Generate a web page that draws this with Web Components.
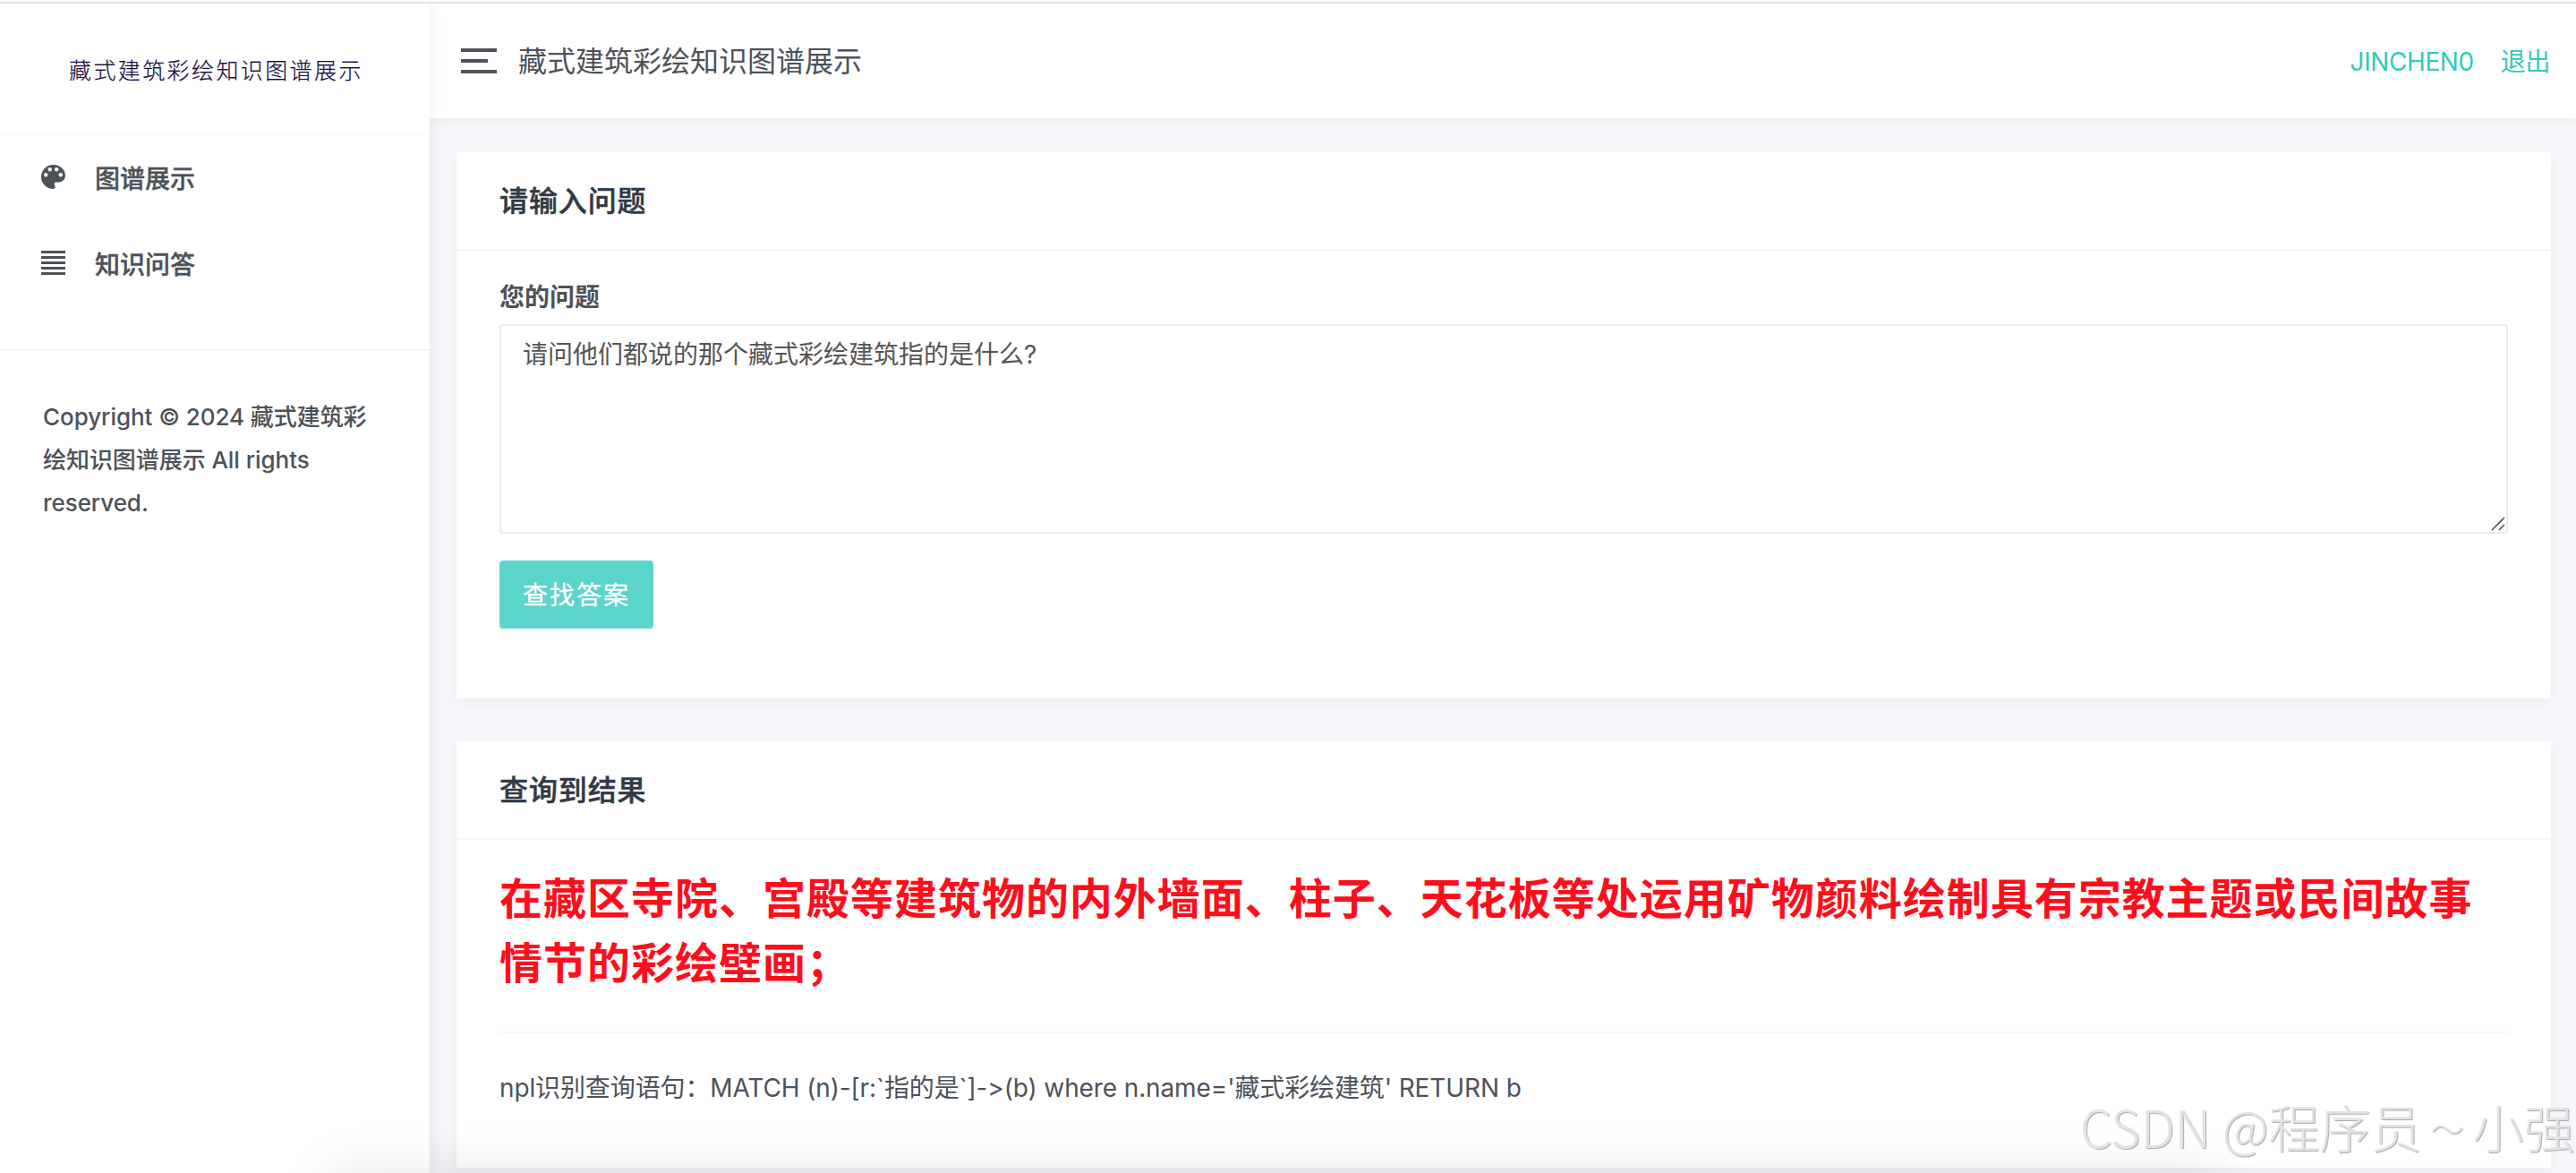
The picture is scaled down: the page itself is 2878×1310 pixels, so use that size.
<!DOCTYPE html>
<html lang="zh-CN">
<head>
<meta charset="utf-8">
<title>藏式建筑彩绘知识图谱展示</title>
<style>
    html, body {
        margin: 0;
        height: 1310px;
        overflow: hidden;
    }

    body {
        font-family: Inter, "Noto Sans CJK SC", sans-serif;
        font-size: 28px;
        color: #4d5259;
        background: #f5f6fa;
    }
</style>
</head>
<body>
<kg-app>
    <kg-sidebar slot="sidebar" logo="藏式建筑彩绘知识图谱展示">
        <kg-nav-item icon="palette">图谱展示</kg-nav-item>
        <kg-nav-item icon="lines">知识问答</kg-nav-item>
        <span slot="footer">Copyright © 2024 藏式建筑彩绘知识图谱展示 All rights reserved.</span>
    </kg-sidebar>
    <kg-header slot="header">
        藏式建筑彩绘知识图谱展示
        <kg-link slot="links">JINCHEN0</kg-link>
        <kg-link slot="links">退出</kg-link>
    </kg-header>
    <kg-card style="height: 610px">
        <span slot="title">请输入问题</span>
        <kg-question label="您的问题" value="请问他们都说的那个藏式彩绘建筑指的是什么?"></kg-question>
    </kg-card>
    <kg-card style="height: 476px">
        <span slot="title">查询到结果</span>
        <kg-answer>
            在藏区寺院、宫殿等建筑物的内外墙面、柱子、天花板等处运用矿物颜料绘制具有宗教主题或民间故事情节的彩绘壁画；
            <span slot="query">npl识别查询语句：MATCH (n)-[r:`指的是`]-&gt;(b) where n.name='藏式彩绘建筑' RETURN b</span>
        </kg-answer>
    </kg-card>
</kg-app>
<kg-watermark></kg-watermark>

<script>
const ICONS = {
    palette: `<svg width="27" height="27" viewBox="3 3 18 18"><path fill="currentColor" d="M12 3a9 9 0 0 0 0 18c.83 0 1.5-.67 1.5-1.5 0-.39-.15-.74-.39-1.01-.23-.26-.38-.61-.38-.99 0-.83.67-1.5 1.5-1.5H16c2.76 0 5-2.24 5-5 0-4.42-4.03-8-9-8zm-5.5 9a1.5 1.5 0 1 1 0-3 1.5 1.5 0 0 1 0 3zm3-4a1.5 1.5 0 1 1 0-3 1.5 1.5 0 0 1 0 3zm5 0a1.5 1.5 0 1 1 0-3 1.5 1.5 0 0 1 0 3zm3 4a1.5 1.5 0 1 1 0-3 1.5 1.5 0 0 1 0 3z"/></svg>`,
    lines: `<svg width="27" height="27" viewBox="0 0 27 27"><path fill="currentColor" d="M0 0h27v3H0zM0 6h27v3H0zM0 12h27v3H0zM0 18h27v3H0zM0 24h27v3H0z"/></svg>`
};

class KgElement extends HTMLElement {

    constructor() {
        super();
        this.attachShadow({mode: "open"});
    }

    connectedCallback() {
        this.shadowRoot.innerHTML = `<style>* { margin: 0; padding: 0; box-sizing: border-box; }</style>` + this.template();
    }
}

class KgApp extends KgElement {
    template() {
        return `
            <style>
                :host {
                    display: grid;
                    grid-template-columns: 480px 1fr;
                    grid-template-rows: 4px 128px 1fr;
                    height: 1310px;
                    overflow: hidden;
                    position: relative;
                }
                .top {
                    grid-column: 1 / 3;
                    border-top: 2px solid #fff;
                    border-bottom: 2px solid #e2e2e2;
                }
                .side {
                    grid-row: 2 / 4;
                    z-index: 2;
                    display: grid;
                }
                .head {
                    display: grid;
                    z-index: 1;
                }
                main {
                    display: flex;
                    flex-direction: column;
                    gap: 48px;
                    padding: 38px 28px 0 30px;
                }
                /* soft shade rising from below the window's lower edge */
                .haze {
                    position: absolute;
                    z-index: 3;
                    left: 370px;
                    right: 400px;
                    top: 1312px;
                    height: 200px;
                    box-shadow: 0 0 60px rgba(0, 0, 0, .11);
                }
            </style>
            <div class="top"></div>
            <div class="side"><slot name="sidebar"></slot></div>
            <div class="head"><slot name="header"></slot></div>
            <main><slot></slot></main>
            <div class="haze"></div>`;
    }
}

class KgSidebar extends KgElement {
    template() {
        return `
            <style>
                :host {
                    display: flex;
                    flex-direction: column;
                    background: #fff;
                    box-shadow: 0 0 16px rgba(0, 0, 0, .08);
                    clip-path: inset(0 -30px 0 0);
                }
                .logo {
                    height: 147px;
                    margin: 0 2px;
                    padding-left: 75px;
                    border-bottom: 1px solid #f5f5f5;
                    font-family: KaiTi, STKaiti, "Noto Sans CJK SC", sans-serif;
                    font-size: 25px;
                    font-weight: 300;
                    letter-spacing: 2.4px;
                    line-height: 147px;
                    color: #150a42;
                    -webkit-text-stroke: .2px;
                    white-space: nowrap;
                }
                nav {
                    height: 241px;
                    border-bottom: 2px solid #f5f6f7;
                }
                footer {
                    padding: 50px 56px 0 48px;
                    font-size: 26px;
                    font-weight: 500;
                    letter-spacing: -.06px;
                    line-height: 48px;
                }
            </style>
            <div class="logo">${this.getAttribute("logo")}</div>
            <nav><slot></slot></nav>
            <footer><slot name="footer"></slot></footer>`;
    }
}

class KgNavItem extends KgElement {
    template() {
        return `
            <style>
                :host {
                    display: flex;
                    align-items: center;
                    gap: 33px;
                    height: 96px;
                    padding-left: 46px;
                    font-weight: 500;
                    line-height: 40px;
                }
                svg {
                    display: block;
                    margin-bottom: 3px;
                }
                span {
                    padding-top: 2px;
                    -webkit-text-stroke: .4px;
                }
            </style>
            ${ICONS[this.getAttribute("icon")]}
            <span><slot></slot></span>`;
    }
}

class KgHeader extends KgElement {
    template() {
        return `
            <style>
                :host {
                    display: flex;
                    align-items: center;
                    padding: 0 29px 0 35px;
                    background: #fff;
                    box-shadow: 0 4px 12px rgba(0, 0, 0, .04);
                }
                .toggle {
                    display: flex;
                    flex-direction: column;
                    gap: 8px;
                    width: 40px;
                    margin-right: 24px;
                }
                .toggle i {
                    height: 4px;
                    background: #4d5259;
                }
                .toggle i:nth-child(2) {
                    width: 30px;
                }
                h1 {
                    flex: 1;
                    padding-top: 2px;
                    font-size: 32px;
                    font-weight: 400;
                    line-height: 48px;
                }
                .links {
                    display: flex;
                    gap: 30px;
                    padding-top: 2px;
                }
            </style>
            <div class="toggle"><i></i><i></i><i></i></div>
            <h1><slot></slot></h1>
            <div class="links"><slot name="links"></slot></div>`;
    }
}

class KgLink extends KgElement {
    template() {
        return `
            <style>
                :host {
                    display: block;
                    letter-spacing: -.4px;
                    line-height: 42px;
                    color: #33cabb;
                }
            </style>
            <slot></slot>`;
    }
}

class KgCard extends KgElement {
    template() {
        return `
            <style>
                :host {
                    display: block;
                    flex: none;
                    box-sizing: border-box;
                    background: #fff;
                    box-shadow: 0 4px 10px rgba(0, 0, 0, .04);
                }
                h4 {
                    height: 110px;
                    padding: 0 48px;
                    border-bottom: 2px solid #f5f6f7;
                    font-size: 32px;
                    font-weight: 500;
                    letter-spacing: .9px;
                    line-height: 110px;
                    color: #313944;
                    -webkit-text-stroke: .5px;
                }
                .body {
                    padding: 0 48px;
                }
            </style>
            <h4><slot name="title"></slot></h4>
            <div class="body"><slot></slot></div>`;
    }
}

class KgQuestion extends KgElement {
    template() {
        return `
            <style>
                :host {
                    display: block;
                    padding-top: 30px;
                }
                label {
                    display: block;
                    height: 52px;
                    font-weight: 600;
                    line-height: 44px;
                }
                .field {
                    position: relative;
                    height: 234px;
                    margin-bottom: 30px;
                }
                textarea {
                    display: block;
                    width: 100%;
                    height: 100%;
                    padding: 11px 24px;
                    border: 2px solid #ebebeb;
                    border-radius: 4px;
                    outline: none;
                    resize: none;
                    background: #fff;
                    font: inherit;
                    line-height: 42px;
                    color: #555;
                }
                .grip {
                    position: absolute;
                    right: 3px;
                    bottom: 3px;
                }
                button {
                    display: block;
                    width: 172px;
                    height: 76px;
                    padding-top: 1px;
                    border: 0;
                    border-radius: 4px;
                    background: #5bd5c9;
                    font: inherit;
                    letter-spacing: 2px;
                    line-height: 76px;
                    color: #fff;
                    -webkit-text-stroke: .3px;
                }
            </style>
            <label>${this.getAttribute("label")}</label>
            <div class="field">
                <textarea>${this.getAttribute("value")}</textarea>
                <svg class="grip" width="16" height="16" viewBox="0 0 16 16"><path d="M1 15L15 1M9 15l6-6" stroke="#555" stroke-width="1.6"/></svg>
            </div>
            <button>查找答案</button>`;
    }
}

class KgAnswer extends KgElement {
    template() {
        return `
            <style>
                :host {
                    display: block;
                    padding-top: 30px;
                }
                h3 {
                    height: 184px;
                    margin-right: -2px;
                    font-size: 48px;
                    font-weight: 600;
                    letter-spacing: .99px;
                    line-height: 72px;
                    color: #ff0d1b;
                }
                p {
                    padding-top: 40px;
                    border-top: 2px solid #f5f6f7;
                    font-feature-settings: "calt" 0;
                    letter-spacing: -.12px;
                    line-height: 42px;
                }
            </style>
            <h3><slot></slot></h3>
            <p><slot name="query"></slot></p>`;
    }
}

class KgWatermark extends KgElement {
    template() {
        return `
            <style>
                :host {
                    position: absolute;
                    z-index: 5;
                    left: 2324px;
                    top: 1217px;
                    width: 554px;
                    font-size: 57px;
                    font-weight: 300;
                    line-height: 80px;
                    white-space: nowrap;
                    color: #e3e3e3;
                    text-shadow: 1px 1px 1px #a8a8a8;
                    font-family: "Noto Sans CJK SC", sans-serif;
                }
                .wave {
                    display: inline-block;
                    width: 57px;
                    font-size: 37px;
                    line-height: 1;
                    text-align: center;
                    vertical-align: 6px;
                }
            </style>
            CSDN @程序员<span class="wave">～</span>小强`;
    }
}

customElements.define("kg-app", KgApp);
customElements.define("kg-sidebar", KgSidebar);
customElements.define("kg-nav-item", KgNavItem);
customElements.define("kg-header", KgHeader);
customElements.define("kg-link", KgLink);
customElements.define("kg-card", KgCard);
customElements.define("kg-question", KgQuestion);
customElements.define("kg-answer", KgAnswer);
customElements.define("kg-watermark", KgWatermark);
</script>
</body>
</html>
